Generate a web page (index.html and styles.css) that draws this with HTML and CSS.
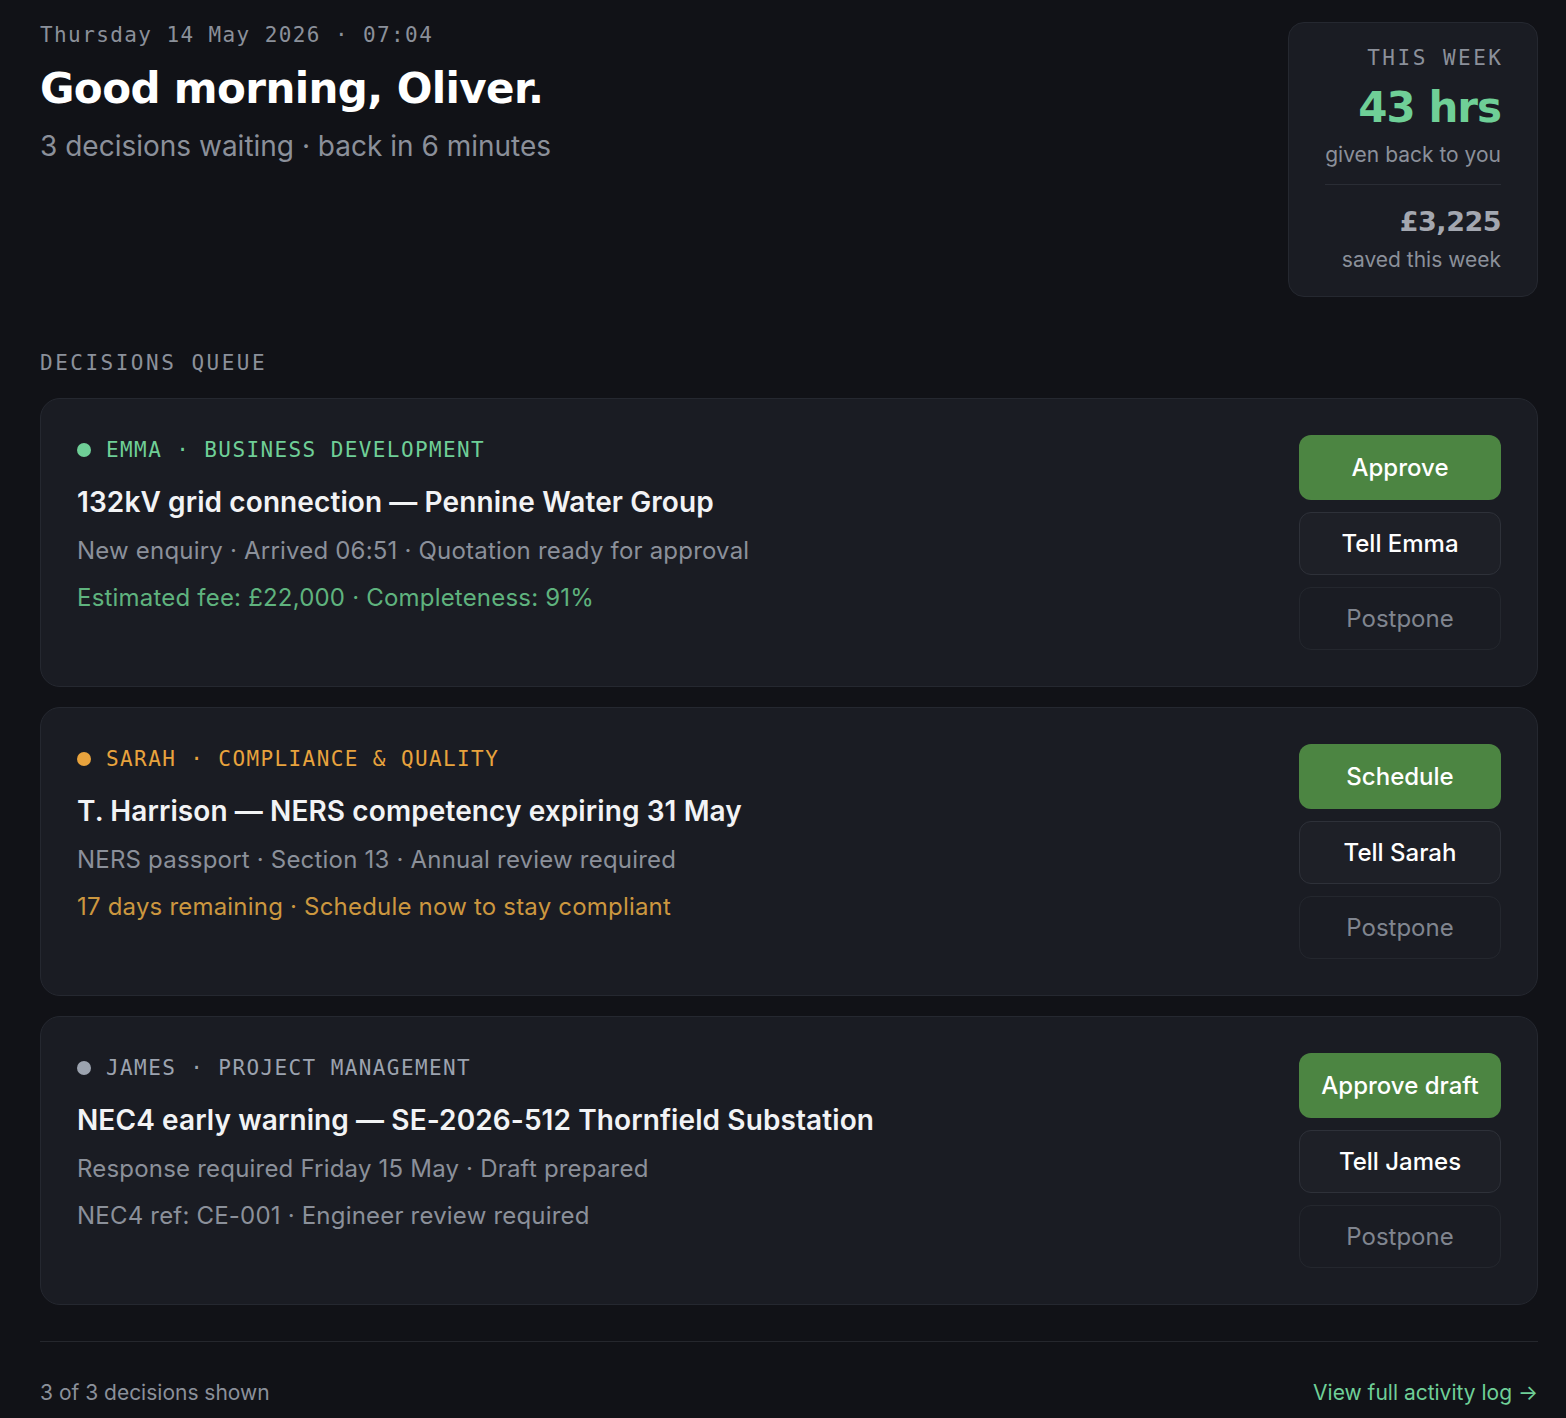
FILE: index.html
```html
<!DOCTYPE html>
<html lang="en">
<head>
<meta charset="utf-8">
<title>Decisions</title>
<link rel="stylesheet" href="styles.css">
</head>
<body>
<div class="page">
  <header class="top">
    <div class="greeting">
      <div class="date">Thursday 14 May 2026 · 07:04</div>
      <h1 class="hello">Good morning, Oliver.</h1>
      <p class="sub">3 decisions waiting · back in 6 minutes</p>
    </div>
    <aside class="stats">
      <div class="stats-inner">
        <div class="stats-label">THIS WEEK</div>
        <div class="stats-hours">43 hrs</div>
        <div class="stats-note">given back to you</div>
        <div class="stats-rule"></div>
        <div class="stats-money">£3,225</div>
        <div class="stats-note tight">saved this week</div>
      </div>
    </aside>
  </header>

  <h2 class="section">DECISIONS QUEUE</h2>

  <section class="queue">
    <article class="card green">
      <div class="card-body">
        <div class="who"><span class="dot"></span>EMMA · BUSINESS DEVELOPMENT</div>
        <h3 class="title">132kV grid connection — Pennine Water Group</h3>
        <p class="meta">New enquiry · Arrived 06:51 · Quotation ready for approval</p>
        <p class="meta accent">Estimated fee: £22,000 · Completeness: 91%</p>
      </div>
      <div class="actions">
        <button class="btn primary">Approve</button>
        <button class="btn secondary">Tell Emma</button>
        <button class="btn ghost">Postpone</button>
      </div>
    </article>

    <article class="card amber">
      <div class="card-body">
        <div class="who"><span class="dot"></span>SARAH · COMPLIANCE &amp; QUALITY</div>
        <h3 class="title">T. Harrison — NERS competency expiring 31 May</h3>
        <p class="meta">NERS passport · Section 13 · Annual review required</p>
        <p class="meta accent">17 days remaining · Schedule now to stay compliant</p>
      </div>
      <div class="actions">
        <button class="btn primary">Schedule</button>
        <button class="btn secondary">Tell Sarah</button>
        <button class="btn ghost">Postpone</button>
      </div>
    </article>

    <article class="card grey">
      <div class="card-body">
        <div class="who"><span class="dot"></span>JAMES · PROJECT MANAGEMENT</div>
        <h3 class="title">NEC4 early warning — SE-2026-512 Thornfield Substation</h3>
        <p class="meta">Response required Friday 15 May · Draft prepared</p>
        <p class="meta accent">NEC4 ref: CE-001 · Engineer review required</p>
      </div>
      <div class="actions">
        <button class="btn primary">Approve draft</button>
        <button class="btn secondary">Tell James</button>
        <button class="btn ghost">Postpone</button>
      </div>
    </article>
  </section>

  <footer class="foot">
    <span class="count">3 of 3 decisions shown</span>
    <a class="log" href="#">View full activity log →</a>
  </footer>
</div>
</body>
</html>
```

FILE: styles.css
```css
* { box-sizing: border-box; }

html, body {
  margin: 0;
  background: #111217;
}

body {
  font-family: "Inter", "Noto Sans", sans-serif;
  color: #f2f3f5;
}

.page {
  padding: 22px 28px 0 40px;
}

.top {
  display: flex;
  justify-content: space-between;
  align-items: flex-start;
}

.date {
  font-family: "DejaVu Sans Mono", "Liberation Mono", monospace;
  font-size: 21px;
  line-height: 26px;
  letter-spacing: 1.4px;
  color: #8b909a;
}

.hello {
  margin: 15px 0 0;
  font-family: "DejaVu Sans", sans-serif;
  font-weight: 700;
  font-size: 42px;
  line-height: 52px;
  letter-spacing: -0.6px;
  color: #ffffff;
}

.sub {
  margin: 13px 0 0;
  font-size: 28px;
  line-height: 36px;
  color: #8b909a;
}

.stats {
  background: #1a1c23;
  border: 1px solid #252830;
  border-radius: 16px;
  padding: 22px 36px 22px 36px;
  text-align: right;
}

.stats-inner {
  display: flex;
  flex-direction: column;
  align-items: stretch;
}

.stats-label {
  font-family: "DejaVu Sans Mono", "Liberation Mono", monospace;
  font-size: 21px;
  line-height: 26px;
  letter-spacing: 2.5px;
  margin-right: -2.5px;
  color: #8b909a;
}

.stats-hours {
  margin-top: 11px;
  font-family: "DejaVu Sans", sans-serif;
  font-weight: 700;
  font-size: 42px;
  line-height: 52px;
  letter-spacing: -1px;
  color: #6fcf97;
}

.stats-note {
  margin-top: 7px;
  font-size: 21px;
  line-height: 28px;
  color: #8b909a;
}

.stats-note.tight { margin-top: 6px; }

.stats-rule {
  margin-top: 15px;
  height: 1px;
  background: #2a2d35;
}

.stats-money {
  margin-top: 19px;
  font-family: "DejaVu Sans", sans-serif;
  font-weight: 700;
  font-size: 27px;
  line-height: 36px;
  letter-spacing: -0.5px;
  color: #a3a7b0;
}

.section {
  margin: 53px 0 22px;
  font-family: "DejaVu Sans Mono", "Liberation Mono", monospace;
  font-weight: 400;
  font-size: 21px;
  line-height: 26px;
  letter-spacing: 2.5px;
  color: #8b909a;
}

.queue {
  display: flex;
  flex-direction: column;
  gap: 20px;
}

.card {
  display: flex;
  align-items: flex-start;
  background: #1a1c23;
  border: 1px solid #252830;
  border-radius: 20px;
  padding: 36px 36px 36px 36px;
}

.card-body {
  flex: 1;
  min-width: 0;
  padding-top: 1px;
}

.who {
  display: flex;
  align-items: center;
  font-family: "DejaVu Sans Mono", "Liberation Mono", monospace;
  font-size: 21px;
  line-height: 28px;
  letter-spacing: 1.4px;
}

.dot {
  width: 14px;
  height: 14px;
  border-radius: 50%;
  margin-right: 15px;
  flex: none;
}

.title {
  margin: 20px 0 0;
  font-size: 28px;
  line-height: 36px;
  font-weight: 600;
  letter-spacing: 0.1px;
  color: #f2f3f5;
}

.meta {
  margin: 15px 0 0;
  font-size: 24px;
  line-height: 32px;
  color: #8b909a;
  letter-spacing: 0.2px;
}

.green .who { color: #6fcf97; }
.green .dot { background: #6fcf97; }
.green .accent { color: #5fb37e; }

.amber .who { color: #e8a33d; }
.amber .dot { background: #e8a33d; }
.amber .accent { color: #cc973f; }

.grey .who { color: #9ca3af; }
.grey .dot { background: #9ca3af; }
.grey .accent { color: #8b909a; }

.actions {
  width: 202px;
  flex: none;
  display: flex;
  flex-direction: column;
  gap: 12px;
}

.btn {
  font-family: "Inter", "Noto Sans", sans-serif;
  font-size: 24px;
  font-weight: 500;
  height: 63px;
  border-radius: 12px;
  border: 1px solid transparent;
  cursor: pointer;
  letter-spacing: 0;
}

.btn.primary {
  height: 65px;
  background: #4c8542;
  color: #ffffff;
}

.btn.secondary {
  background: #1e2027;
  border-color: #2e3139;
  color: #ffffff;
}

.btn.ghost {
  background: transparent;
  border-color: #24272e;
  color: #80858f;
  font-weight: 400;
}

.foot {
  margin-top: 36px;
  border-top: 1px solid #25272d;
  padding-top: 37px;
  display: flex;
  justify-content: space-between;
  align-items: center;
  font-size: 21px;
  line-height: 28px;
}

.count { color: #8b909a; }

.log {
  color: #6fcf97;
  text-decoration: none;
}
```
